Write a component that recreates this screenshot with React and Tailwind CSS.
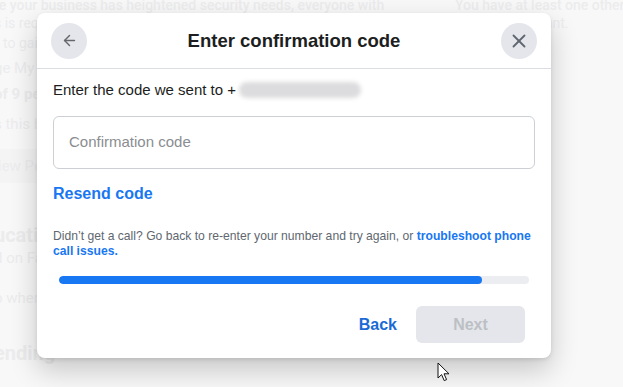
import { ArrowLeft, X } from 'lucide-react'

const font = { fontFamily: '"Liberation Sans", Arial, sans-serif' }

function Backdrop() {
  return (
    <div className="flex w-full h-full text-[#ececed]" style={{ fontFamily: 'Roboto, "Liberation Sans", sans-serif' }}>
      <div className="flex flex-col w-[440px] -ml-[6px] text-[14px] leading-[18px] whitespace-nowrap">
        <p className="-mt-[4px] font-medium">re your business has heightened security needs, everyone with</p>
        <p>s is required to use two-factor authentication. This works with a code from</p>
        <p className="ml-[9px] mt-[2px]">to gain access to your account.</p>
        <p className="mt-[7px] text-[15px]">ge My Business Settings</p>
        <p className="mt-[8px] text-[15px] font-bold">of 9 people</p>
        <p className="mt-[12px] text-[15px]">s this business</p>
        <div className="mt-[16px] w-[110px] h-[34px] bg-[#f4f4f5] rounded-md flex items-center text-[15px] pl-[4px]">iew People</div>
        <p className="mt-[40px] text-[20px] font-bold leading-[24px]">ucation</p>
        <p className="mt-[2px] text-[15px]">d on Facebook</p>
        <p className="mt-[22px] text-[15px]">o when</p>
        <p className="mt-[34px] text-[20px] font-bold leading-[24px]">ending</p>
      </div>
      <div className="flex flex-col ml-[21px] text-[14px] leading-[18px] whitespace-nowrap">
        <p className="-mt-[4px] font-medium">You have at least one other admin</p>
        <p className="-ml-[130px]">who can help you access your account.</p>
      </div>
    </div>
  )
}

function Cursor() {
  return (
    <svg className="absolute left-[437px] top-[362px]" width="14" height="20" viewBox="0 0 14 20">
      <path d="M1 1 L1 16 L4.6 12.6 L7.2 18.6 L9.6 17.6 L7 11.8 L12 11.8 Z" fill="#fff" stroke="#111" strokeWidth="1" strokeLinejoin="round" />
    </svg>
  )
}

export default function App() {
  return (
    <div className="relative w-[623px] h-[387px] overflow-hidden bg-[#f8f8f9]" style={font}>
      <Backdrop />

      <div className="absolute left-[37px] top-[13px] w-[514px] bg-white rounded-lg shadow-[0_12px_28px_rgba(0,0,0,0.2),0_2px_4px_rgba(0,0,0,0.1)]">
        <div className="h-[56px] flex items-center justify-between px-[14px] border-b border-[#dadde1]">
          <button className="w-9 h-9 rounded-full bg-[#e4e6eb] flex items-center justify-center text-[#65676b]">
            <ArrowLeft size={17} strokeWidth={2} />
          </button>
          <h2 className="text-[18.5px] font-bold text-[#1c1e21]">Enter confirmation code</h2>
          <button className="w-9 h-9 rounded-full bg-[#e4e6eb] flex items-center justify-center text-[#606770]">
            <X size={22} strokeWidth={2} />
          </button>
        </div>

        <div className="px-4 pt-[11px]">
          <div className="flex items-center text-[15px] leading-[20px] text-[#1c1e21]">
            <span>Enter the code we sent to +</span>
            <span className="ml-[3px] w-[122px] h-[16px] rounded-full bg-[#dcdcde] blur-[2px]" />
          </div>

          <div className="mt-[16px] h-[53px] border border-[#ccd0d5] rounded-md flex items-center px-[15px] text-[15px] text-[#8a8d91]">
            Confirmation code
          </div>

          <p className="mt-[15px] text-[16px] leading-[20px] font-bold text-[#1877f2]">Resend code</p>

          <p className="mt-[25px] text-[12.15px] leading-[15px] text-[#606770]">
            Didn’t get a call? Go back to re-enter your number and try again, or{' '}
            <span className="font-bold text-[#1877f2]">troubleshoot phone call issues.</span>
          </p>

          <div className="mt-[17px] mx-[6px] h-[8px] rounded-full bg-[#ebedf0] overflow-hidden">
            <div className="h-full rounded-full bg-[#1877f2]" style={{ width: '90%' }} />
          </div>
        </div>

        <div className="flex items-center justify-end gap-[19px] pr-[26px] pt-[22px] pb-[15px]">
          <button className="text-[16px] font-bold text-[#1a6ad6]">Back</button>
          <button className="w-[109px] h-[37px] rounded-md bg-[#e4e6eb] text-[16px] font-bold text-[#bcc0c4]">Next</button>
        </div>
      </div>

      <Cursor />
    </div>
  )
}
